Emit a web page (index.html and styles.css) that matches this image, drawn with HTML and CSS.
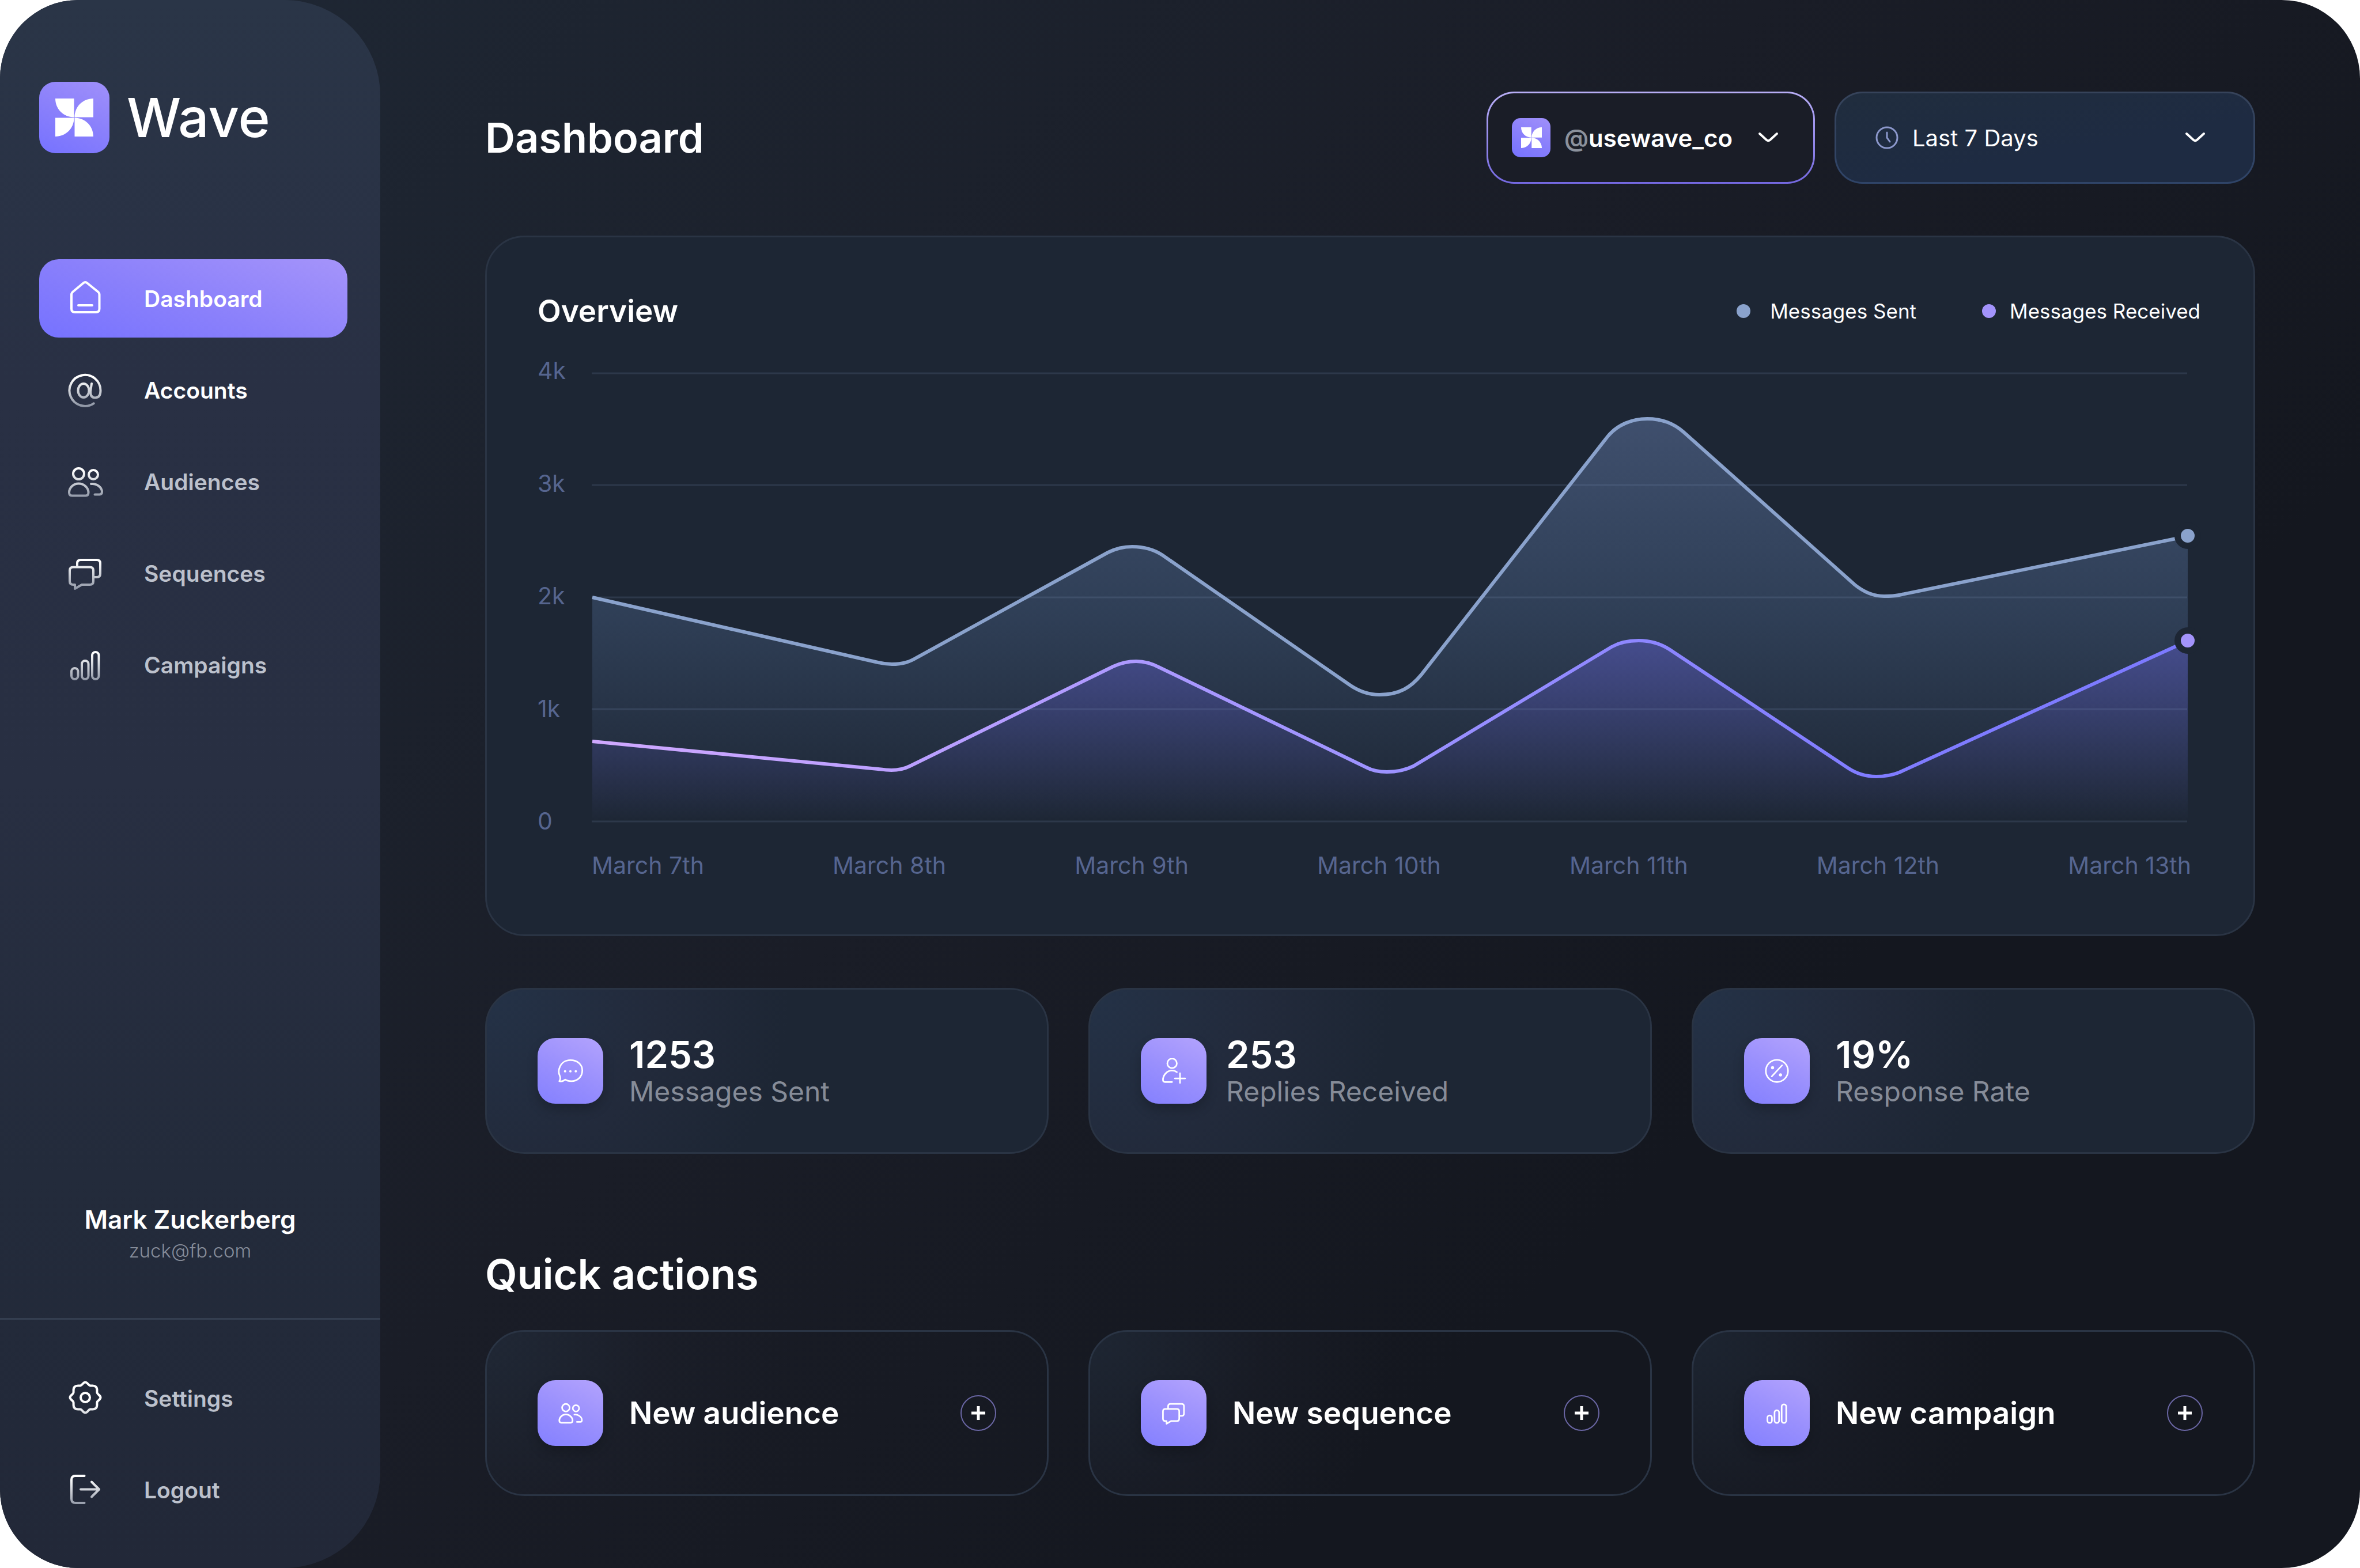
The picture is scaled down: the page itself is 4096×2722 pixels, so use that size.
FILE: index.html
```html
<!DOCTYPE html>
<html lang="en">
<head>
    <meta charset="UTF-8">
    <meta name="viewport" content="width=device-width, initial-scale=1.0">
    <title>Wave | Dashboard</title>
    <link rel="stylesheet" href="styles.css">
</head>
<body>
    <!-- Shared icons -->
    <svg class="sprite" width="0" height="0" aria-hidden="true">
        <defs>
            <linearGradient id="icon-fade" gradientUnits="userSpaceOnUse" x1="0" y1="12" x2="0" y2="60">
                <stop offset="0" stop-color="#ffffff"/>
                <stop offset="1" stop-color="#8f96a5"/>
            </linearGradient>
        </defs>
        <symbol id="logo" viewBox="0 0 66 66">
            <path fill="#fff" d="M0 0H32.5V32.5C14 32.5 0 18 0 0ZM66 0V32.5H33.5C33.5 14 48 0 66 0ZM0 66V33.5H32.5C32.5 52 18 66 0 66ZM33.5 66V33.5C52 33.5 66 48 66 66Z"/>
        </symbol>
        <symbol id="home" viewBox="0 0 64 64">
            <path d="M28.500 5.500a5 5 0 0 1 7 0L54 20.500q2.500 2 2.500 5V50q0 6-6 6H14q-6 0-6-6V25.500q0-3 2.500-5zM20 44H44"/>
        </symbol>
        <symbol id="at" viewBox="0 0 64 64">
            <ellipse cx="29" cy="33" rx="9.500" ry="12"/>
            <path d="M43 21L41 35C41 42 44 45.500 49 45.500C55 45.500 58.500 42 58.500 33A27 27 0 1 0 46.600 55.300"/>
        </symbol>
        <symbol id="users" viewBox="0 0 64 64">
            <circle cx="20.500" cy="18.500" r="9.500"/>
            <circle cx="46" cy="20" r="8"/>
            <path d="M20.500 35.500C11 35.500 4 43 4 51q0 5.500 5 5.500H32.500q5 0 5-5.500C37.500 43 30 35.500 20.500 35.500zM42 36C52 35 61 42 61 50q0 4-4 4.500H48.500"/>
        </symbol>
        <symbol id="chats" viewBox="0 0 64 64">
            <path d="M18 20V15q0-6 6-6H52q6 0 6 6V33q0 6-6 6H47M11 21.500H40q6 0 6 6V46q0 6-6 6H26L14 59V52H11q-6 0-6-6V27.500q0-6 6-6z"/>
        </symbol>
        <symbol id="bars" viewBox="0 0 64 64">
            <rect x="8" y="38" width="11.500" height="19" rx="5.700"/>
            <rect x="26" y="25" width="11.500" height="32" rx="5.700"/>
            <rect x="44" y="10" width="11.500" height="47" rx="5.700"/>
        </symbol>
        <symbol id="gear" viewBox="0 0 64 64">
            <g transform="translate(32 31)">
                <circle r="8"/>
                <path d="M-8.500-20.500C-5-21-4-26.500 0-26.500C4-26.500 5-21 8.500-20.500C12.500-20 15.500-21.500 18.500-18.500C21.500-15.500 20-12.500 20.500-8.500C21-5 26.500-4 26.500 0C26.500 4 21 5 20.500 8.500C20 12.500 21.500 15.500 18.500 18.500C15.500 21.500 12.500 20 8.500 20.500C5 21 4 26.500 0 26.500C-4 26.500-5 21-8.500 20.500C-12.500 20-15.500 21.500-18.500 18.500C-21.500 15.500-20 12.500-20.500 8.500C-21 5-26.500 4-26.500 0C-26.500-4-21-5-20.500-8.500C-20-12.500-21.500-15.500-18.500-18.500C-15.500-21.500-12.500-20-8.500-20.500Z"/>
            </g>
        </symbol>
        <symbol id="logout" viewBox="0 0 64 64">
            <path d="M30.500 8H15q-7 0-7 7V48q0 7 7 7H30.500M24 31.500H56M43 18.500L56 31.500L43 44.500"/>
        </symbol>
        <symbol id="message" viewBox="0 0 64 64">
            <path d="M4 58C7 54 7 49 5 44C2 38 2 30 5 23C9 12 19 5 32 5C50 5 62 16 62 31C62 47 50 58 34 58C28 58 23 57 19 54C14 58 9 59.500 4 58Z"/>
            <path stroke-width="6" d="M18.500 33v.1M32 33v.1M45.500 33v.1"/>
        </symbol>
        <symbol id="user-plus" viewBox="0 0 64 64">
            <circle cx="28" cy="13" r="12"/>
            <path d="M40 35C36 32 32 31 28 31C14 31 5 44 5 55Q5 60 10 60H28M48 38V64M35 51H61"/>
        </symbol>
        <symbol id="percent" viewBox="0 0 64 64">
            <circle cx="32" cy="32" r="28"/>
            <path d="M19 46L45 18"/>
            <circle cx="21" cy="24" r="2"/>
            <circle cx="41" cy="42" r="2"/>
        </symbol>
        <symbol id="chevron" viewBox="0 0 36 20">
            <path d="M3 3L15 14Q18 16.500 21 14L33 3"/>
        </symbol>
    </svg>

    <div class="app">
        <aside class="sidebar">
            <a class="brand" href="#">
                <span class="brand-mark"><svg><use href="#logo"/></svg></span>
                <span class="brand-name">Wave</span>
            </a>

            <nav class="nav" aria-label="Main">
                <a class="nav-link active" href="#"><svg class="nav-icon" stroke="#fff"><use href="#home"/></svg>Dashboard</a>
                <a class="nav-link bright" href="#"><svg class="nav-icon" stroke="url(#icon-fade)"><use href="#at"/></svg>Accounts</a>
                <a class="nav-link" href="#"><svg class="nav-icon" stroke="url(#icon-fade)"><use href="#users"/></svg>Audiences</a>
                <a class="nav-link" href="#"><svg class="nav-icon" stroke="url(#icon-fade)"><use href="#chats"/></svg>Sequences</a>
                <a class="nav-link" href="#"><svg class="nav-icon" stroke="url(#icon-fade)"><use href="#bars"/></svg>Campaigns</a>
            </nav>

            <div class="profile">
                <p class="profile-name">Mark Zuckerberg</p>
                <p class="profile-email">zuck@fb.com</p>
            </div>

            <nav class="nav nav-bottom" aria-label="Account">
                <a class="nav-link" href="#"><svg class="nav-icon" stroke="url(#icon-fade)"><use href="#gear"/></svg>Settings</a>
                <a class="nav-link" href="#"><svg class="nav-icon" stroke="url(#icon-fade)"><use href="#logout"/></svg>Logout</a>
            </nav>
        </aside>

        <main class="main">
            <header class="topbar">
                <h1>Dashboard</h1>
                <div class="filters">
                    <div class="picker picker-account">
                        <span class="brand-mark small"><svg><use href="#logo"/></svg></span>
                        <label class="at-sign" for="account" aria-label="Account">@</label>
                        <select id="account">
                            <option>usewave_co</option>
                        </select>
                        <svg class="chevron"><use href="#chevron"/></svg>
                    </div>
                    <div class="picker picker-range">
                        <svg class="clock" viewBox="0 0 40 40" aria-hidden="true">
                            <circle cx="20" cy="20" r="18"/>
                            <path d="M20 11V20L25 27"/>
                        </svg>
                        <select id="range" aria-label="Date range">
                            <option>Last 7 Days</option>
                        </select>
                        <svg class="chevron"><use href="#chevron"/></svg>
                    </div>
                </div>
            </header>

            <!-- Overview chart -->
            <section class="card overview">
                <div class="overview-head">
                    <h2>Overview</h2>
                    <ul class="legend">
                        <li class="sent">Messages Sent</li>
                        <li class="received">Messages Received</li>
                    </ul>
                </div>
                <div class="chart">
                    <div class="y-axis">
                        <span>4k</span>
                        <span>3k</span>
                        <span>2k</span>
                        <span>1k</span>
                        <span>0</span>
                    </div>
                    <div class="plot">
                        <svg viewBox="0 0 2770 782" role="img" aria-label="Messages sent and received, March 7th to March 13th">
                            <defs>
                                <linearGradient id="sent-fill" gradientUnits="userSpaceOnUse" x1="0" y1="80" x2="0" y2="779">
                                    <stop offset="0" stop-color="#829fdc" stop-opacity="0.34"/>
                                    <stop offset="0.5" stop-color="#769fdc" stop-opacity="0.2"/>
                                    <stop offset="1" stop-color="#769fdc" stop-opacity="0"/>
                                </linearGradient>
                                <linearGradient id="received-fill" gradientUnits="userSpaceOnUse" x1="0" y1="465" x2="0" y2="779">
                                    <stop offset="0" stop-color="#746cff" stop-opacity="0.34"/>
                                    <stop offset="1" stop-color="#746cff" stop-opacity="0"/>
                                </linearGradient>
                                <linearGradient id="received-line" gradientUnits="userSpaceOnUse" x1="0" y1="0" x2="2770" y2="0">
                                    <stop offset="0" stop-color="#cfa8ff"/>
                                    <stop offset="0.5" stop-color="#9c92ff"/>
                                    <stop offset="0.8" stop-color="#807cff"/>
                                    <stop offset="1" stop-color="#7c7aff"/>
                                </linearGradient>
                            </defs>
                            <path fill="url(#sent-fill)" d="M1 390L497 503C505 505 513 506 521 506C540 506 552 502 565 494L896 312C910 305 924 302 938 302C960 302 976 307 991 317L1317 543C1332 553 1348 559 1367 559C1402 559 1422 546 1440 524L1763 111C1780 90 1806 80 1832 80C1858 80 1878 88 1895 103L2192 368C2208 381 2224 388 2243 388C2252 388 2260 388 2269 386L2770 284V779H1Z"/>
                            <path fill="url(#received-fill)" d="M1 640L497 688C505 689 513 690 520 690C533 690 542 688 552 683L905 510C918 504 930 501 945 501C960 501 973 505 986 512L1344 685C1355 691 1366 693 1380 693C1398 693 1412 690 1426 683L1770 476C1784 468 1800 465 1817 465C1836 465 1854 470 1870 480L2180 686C2195 696 2210 701 2229 701C2244 701 2256 699 2269 694L2770 465V779H1Z"/>
                            <path class="grid-lines" d="M0 1H2769M0 195H2769M0 390H2769M0 584H2769M0 779H2769"/>
                            <path class="line" stroke="#8aa2cc" d="M1 390L497 503C505 505 513 506 521 506C540 506 552 502 565 494L896 312C910 305 924 302 938 302C960 302 976 307 991 317L1317 543C1332 553 1348 559 1367 559C1402 559 1422 546 1440 524L1763 111C1780 90 1806 80 1832 80C1858 80 1878 88 1895 103L2192 368C2208 381 2224 388 2243 388C2252 388 2260 388 2269 386L2769 284"/>
                            <path class="line" stroke="url(#received-line)" d="M1 640L497 688C505 689 513 690 520 690C533 690 542 688 552 683L905 510C918 504 930 501 945 501C960 501 973 505 986 512L1344 685C1355 691 1366 693 1380 693C1398 693 1412 690 1426 683L1770 476C1784 468 1800 465 1817 465C1836 465 1854 470 1870 480L2180 686C2195 696 2210 701 2229 701C2244 701 2256 699 2269 694L2769 466"/>
                            <circle class="marker" cx="2770" cy="283" r="17.500" fill="#8aa2cc"/>
                            <circle class="marker" cx="2770" cy="465" r="17.500" fill="#a393fb"/>
                        </svg>
                    </div>
                    <div class="x-axis">
                        <span>March 7th</span>
                        <span>March 8th</span>
                        <span>March 9th</span>
                        <span>March 10th</span>
                        <span>March 11th</span>
                        <span>March 12th</span>
                        <span>March 13th</span>
                    </div>
                </div>
            </section>

            <!-- Stats -->
            <section class="row stats">
                <article class="card tile-card">
                    <span class="tile"><svg><use href="#message"/></svg></span>
                    <div>
                        <p class="stat-value">1253</p>
                        <p class="stat-label">Messages Sent</p>
                    </div>
                </article>
                <article class="card tile-card tight">
                    <span class="tile"><svg><use href="#user-plus"/></svg></span>
                    <div>
                        <p class="stat-value">253</p>
                        <p class="stat-label">Replies Received</p>
                    </div>
                </article>
                <article class="card tile-card">
                    <span class="tile"><svg><use href="#percent"/></svg></span>
                    <div>
                        <p class="stat-value">19%</p>
                        <p class="stat-label">Response Rate</p>
                    </div>
                </article>
            </section>

            <!-- Quick actions -->
            <h2 class="section-title">Quick actions</h2>
            <section class="row actions">
                <article class="card tile-card">
                    <span class="tile"><svg><use href="#users"/></svg></span>
                    <h3>New audience</h3>
                    <button class="add" type="button" aria-label="New audience"><svg viewBox="0 0 24 24"><path d="M12 0V24M0 12H24"/></svg></button>
                </article>
                <article class="card tile-card">
                    <span class="tile"><svg><use href="#chats"/></svg></span>
                    <h3>New sequence</h3>
                    <button class="add" type="button" aria-label="New sequence"><svg viewBox="0 0 24 24"><path d="M12 0V24M0 12H24"/></svg></button>
                </article>
                <article class="card tile-card">
                    <span class="tile"><svg><use href="#bars"/></svg></span>
                    <h3>New campaign</h3>
                    <button class="add" type="button" aria-label="New campaign"><svg viewBox="0 0 24 24"><path d="M12 0V24M0 12H24"/></svg></button>
                </article>
            </section>
        </main>
    </div>
</body>
</html>
```
FILE: styles.css
```css
* {
    box-sizing: border-box;
}
body {
    margin: 0;
    background: #fff;
    color: #fff;
    font-family: Inter, "Liberation Sans", sans-serif;
}
h1, h2, h3, p, ul {
    margin: 0;
    padding: 0;
}
a {
    color: inherit;
    text-decoration: none;
}
.sprite {
    position: absolute;
}

.app {
    display: flex;
    min-height: 100vh;
    border-radius: 136px;
    overflow: hidden;
    background: linear-gradient(135deg, #1f2835 0%, #1a1d27 45%, #14171f 72%, #14171f 100%);
}

/* Sidebar */
.sidebar {
    display: flex;
    flex-direction: column;
    flex: 0 0 660px;
    padding-top: 142px;
    border-radius: 0 166px 166px 0;
    background: linear-gradient(180deg, #2a3547 0%, #293044 25%, #282f42 50%, #232b3b 75%, #222838 100%);
}
.brand {
    display: flex;
    align-items: center;
    gap: 30px;
    margin-left: 68px;
}
.brand-mark {
    display: flex;
    align-items: center;
    justify-content: center;
    width: 122px;
    height: 124px;
    border-radius: 28px;
    background: linear-gradient(25deg, #7672ff 0%, #8a80fb 50%, #a090fa 100%);
}
.brand-mark svg {
    width: 66px;
    height: 66px;
}
.brand-mark.small {
    width: 67px;
    height: 68px;
    border-radius: 15px;
}
.brand-mark.small svg {
    width: 36px;
    height: 36px;
}
.brand-name {
    font-size: 94px;
    font-weight: 500;
    line-height: 124px;
}

.nav {
    display: flex;
    flex-direction: column;
    gap: 23px;
    margin-top: 184px;
    padding: 0 57px 0 68px;
}
.nav-link {
    display: flex;
    align-items: center;
    gap: 70px;
    height: 136px;
    padding-left: 48px;
    border-radius: 34px;
    color: #bcc1cc;
    font-size: 39px;
    font-weight: 600;
}
.nav-link.bright {
    color: #fff;
}
.nav-link.active {
    background: linear-gradient(20deg, #7672ff 0%, #8a80fb 45%, #a594fa 100%);
    color: #fff;
}
.nav-icon {
    width: 64px;
    height: 64px;
    fill: none;
    stroke-width: 4;
    stroke-linecap: round;
    stroke-linejoin: round;
}
.profile {
    margin-top: auto;
    padding-bottom: 95px;
    border-bottom: 3px solid #343e50;
    text-align: center;
}
.profile-name {
    font-size: 44px;
    font-weight: 600;
    line-height: 64px;
}
.profile-email {
    color: #868c99;
    font-size: 33px;
    font-weight: 300;
    line-height: 44px;
}
.nav-bottom {
    margin-top: 0;
    padding-top: 68px;
    padding-bottom: 68px;
}

/* Main column */
.main {
    flex: 1;
    min-width: 0;
    padding: 159px 182px 125px;
}
.topbar {
    display: flex;
    align-items: center;
    justify-content: space-between;
    margin-bottom: 90px;
}
h1, .section-title {
    font-size: 72px;
    font-weight: 600;
    line-height: 80px;
}
.filters {
    display: flex;
    gap: 34px;
}
.picker {
    display: flex;
    align-items: center;
    height: 160px;
    border: 3px solid transparent;
    border-radius: 48px;
    font-size: 40px;
}
.picker select {
    appearance: none;
    padding: 0;
    border: 0;
    background: none;
    color: #fff;
    font: inherit;
}
.picker option {
    color: #14171f;
}
.picker-account {
    width: 570px;
    padding: 0 60px 0 41px;
    background: linear-gradient(#1a1d27, #1a1d27) padding-box, linear-gradient(180deg, #b8aef5, #7468e0) border-box;
    font-size: 42px;
    font-weight: 600;
}
.picker-range {
    width: 730px;
    padding: 0 83px 0 68px;
    background: linear-gradient(170deg, #202d3e, #1e2b42 60%) padding-box, linear-gradient(180deg, #36435a, #2f4468) border-box;
}
.at-sign {
    margin-left: 24px;
    color: #8b919c;
}
.chevron {
    width: 36px;
    height: 20px;
    margin-left: auto;
    fill: none;
    stroke: #fff;
    stroke-width: 4;
    stroke-linecap: round;
}
.clock {
    width: 40px;
    height: 40px;
    margin-right: 24px;
    fill: none;
    stroke: #8c98cc;
    stroke-width: 3;
    stroke-linecap: round;
}

.card {
    border: 3px solid #2a3444;
    border-radius: 68px;
    background: #1d2634;
}
.overview {
    padding: 96px 92px 96px 88px;
}
.overview-head {
    display: flex;
    align-items: center;
    justify-content: space-between;
    margin-bottom: 47px;
}
.overview-head h2 {
    font-size: 53px;
    font-weight: 600;
    line-height: 64px;
}
.legend {
    display: flex;
    gap: 114px;
    font-size: 35px;
    list-style: none;
}
.legend li {
    display: flex;
    align-items: center;
    gap: 24px;
}
.legend li::before {
    content: "";
    width: 24px;
    height: 24px;
    border-radius: 50%;
    background: #8aa2cc;
}
.legend .sent {
    gap: 34px;
}
.legend .received::before {
    background: #a393fb;
}

/* Chart */
.chart {
    display: grid;
    grid-template-columns: 94px 1fr;
    color: #56658f;
    font-size: 41px;
    line-height: 48px;
}
.y-axis {
    display: flex;
    flex-direction: column;
    justify-content: space-between;
}
.plot {
    padding: 28px 22px 20px 0;
}
.plot svg {
    display: block;
    width: 100%;
    overflow: visible;
}
.grid-lines {
    stroke: rgba(150, 172, 212, 0.14);
    stroke-width: 3;
}
.line {
    fill: none;
    stroke-width: 6;
}
.marker {
    stroke: #1d2634;
    stroke-width: 11;
}
.x-axis {
    display: flex;
    grid-column: 2;
    justify-content: space-between;
    margin: 29px 16px 0 0;
}

/* Stat and action cards */
.row {
    display: grid;
    grid-template-columns: repeat(3, 1fr);
    gap: 69px;
}
.stats {
    margin: 90px 0 169px;
}
.actions {
    margin-top: 57px;
}
.tile-card {
    display: flex;
    align-items: center;
    gap: 45px;
    height: 288px;
    padding: 0 88px;
}
.tile-card.tight {
    gap: 34px;
}
.stats .card {
    background: radial-gradient(circle at 0 0, #243247 0%, #222a3b 30%, #1d2634 52%);
}
.actions .card {
    background: radial-gradient(circle at 0 0, rgba(40, 54, 72, 0.45) 0%, rgba(30, 34, 46, 0.3) 30%, rgba(20, 24, 33, 0) 52%);
}
.tile {
    display: flex;
    align-items: center;
    justify-content: center;
    width: 114px;
    height: 114px;
    border-radius: 31px;
    background: linear-gradient(25deg, #8480ff 0%, #9a90fd 50%, #b3a3fd 100%);
    box-shadow: 0 10px 20px rgba(0, 0, 0, 0.2);
}
.tile svg {
    width: 44px;
    height: 44px;
    fill: none;
    stroke: #fff;
    stroke-width: 4;
    stroke-linecap: round;
    stroke-linejoin: round;
    overflow: visible;
}
.stat-value {
    font-size: 65px;
    font-weight: 600;
    line-height: 72px;
}
.stat-label {
    color: #868c98;
    font-size: 48px;
    line-height: 56px;
}
h3 {
    font-size: 53px;
    font-weight: 600;
    line-height: 64px;
}
.add {
    display: flex;
    align-items: center;
    justify-content: center;
    width: 62px;
    height: 62px;
    margin-left: auto;
    padding: 0;
    border: 2px solid #6a66a4;
    border-radius: 50%;
    background: none;
    cursor: pointer;
}
.add svg {
    width: 24px;
    height: 24px;
    stroke: #fff;
    stroke-width: 5;
}
```
